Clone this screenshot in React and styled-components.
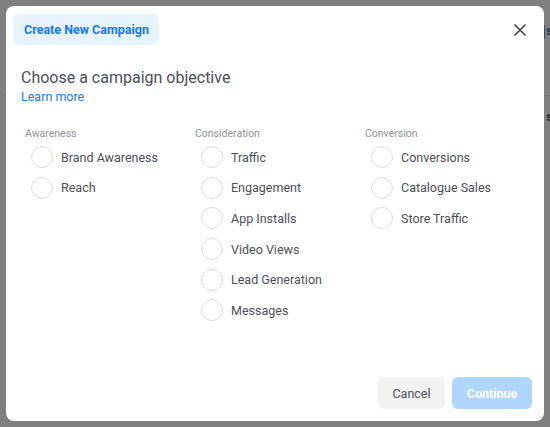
import React from 'react';
import styled, { createGlobalStyle } from 'styled-components';

const GlobalStyle = createGlobalStyle`
    html, body {
        margin: 0;
        padding: 0;
        background: #808080;
        font-family: Roboto, "Liberation Sans", Arial, sans-serif;
    }
`;

const objectives = [
    { title: 'Awareness', items: ['Brand Awareness', 'Reach'] },
    { title: 'Consideration', items: ['Traffic', 'Engagement', 'App Installs', 'Video Views', 'Lead Generation', 'Messages'] },
    { title: 'Conversion', items: ['Conversions', 'Catalogue Sales', 'Store Traffic'] },
];

const App = () => {
    return (
        <>
            <GlobalStyle />
            <Page>
                <PageHeader>
                    <PageTab>s</PageTab>
                </PageHeader>
                <PageRow>s</PageRow>
            </Page>
            <Overlay>
                <Modal>
                    <Header>
                        <HeaderTab>Create New Campaign</HeaderTab>
                        <CloseButton aria-label="Close">
                            <svg width="12" height="12" viewBox="0 0 12 12">
                                <path d="M1 1 L11 11 M11 1 L1 11" stroke="#444950" strokeWidth="1.7" strokeLinecap="round" />
                            </svg>
                        </CloseButton>
                    </Header>
                    <Intro>
                        <Title>Choose a campaign objective</Title>
                        <LearnMore href="#">Learn more</LearnMore>
                    </Intro>
                    <Columns>
                        {objectives.map((group) => (
                            <Column key={group.title}>
                                <GroupTitle>{group.title}</GroupTitle>
                                {group.items.map((item) => (
                                    <Option key={item}>
                                        <Radio />
                                        <OptionLabel>{item}</OptionLabel>
                                    </Option>
                                ))}
                            </Column>
                        ))}
                    </Columns>
                    <Footer>
                        <Button>Cancel</Button>
                        <Button primary disabled>Continue</Button>
                    </Footer>
                </Modal>
            </Overlay>
        </>
    );
};

const Page = styled.div`
    width: 550px;
    height: 427px;
    overflow: hidden;
`;

const PageHeader = styled.div`
    height: 96px;
    border-bottom: 1px solid #737373;
    display: flex;
    justify-content: flex-end;
    padding-top: 25px;
    box-sizing: border-box;
`;

const PageTab = styled.div`
    border-left: 2px solid #1f4f8a;
    padding-left: 1px;
    font-size: 13px;
    font-weight: 700;
    color: #333;
    width: 4px;
    height: 14px;
    line-height: 12px;
    overflow: hidden;
`;

const PageRow = styled.div`
    text-align: right;
    padding-top: 14px;
    font-size: 13px;
    font-weight: 700;
    color: #2a2a2a;
    height: 14px;
    line-height: 14px;
    overflow: hidden;
    margin-right: -3px;
`;

const Overlay = styled.div`
    position: fixed;
    inset: 0;
    padding: 6px;
`;

const Modal = styled.div`
    width: 538px;
    height: 415px;
    background: #fff;
    border-radius: 8px;
    padding: 8px 7px 11px 7px;
    box-sizing: border-box;
    display: flex;
    flex-direction: column;
`;

const Header = styled.div`
    display: flex;
    align-items: center;
    justify-content: space-between;
`;

const HeaderTab = styled.div`
    background: #e7f3ff;
    color: #1877f2;
    font-size: 12.5px;
    font-weight: 700;
    height: 31px;
    line-height: 31px;
    padding: 0 10px 0 11px;
    border-radius: 6px;
`;

const CloseButton = styled.button`
    border: none;
    background: none;
    padding: 0;
    margin-right: 11px;
    width: 12px;
    height: 12px;
    display: flex;
    cursor: pointer;
`;

const Intro = styled.div`
    padding: 23px 8px 0 8px;
`;

const Title = styled.div`
    font-size: 16px;
    color: #4b4f56;
    line-height: 20px;
`;

const LearnMore = styled.a`
    display: block;
    font-size: 12.5px;
    color: #1877f2;
    text-decoration: none;
    line-height: 16px;
    margin-top: 1px;
`;

const Columns = styled.div`
    display: grid;
    grid-template-columns: 170px 170px 170px;
    padding: 22px 0 0 12px;
    flex: 1;
    align-content: start;
`;

const Column = styled.div`
    display: flex;
    flex-direction: column;
`;

const GroupTitle = styled.div`
    font-size: 10.5px;
    color: #90949c;
    line-height: 13px;
    margin-bottom: 2px;
`;

const Option = styled.label`
    display: flex;
    align-items: center;
    height: 30.6px;
    padding-left: 6px;
    gap: 8px;
    cursor: pointer;
`;

const Radio = styled.span`
    width: 20px;
    height: 20px;
    border-radius: 50%;
    border: 1px solid #dadde1;
    box-sizing: content-box;
    flex-shrink: 0;
`;

const OptionLabel = styled.span`
    font-size: 12.5px;
    color: #4b4f56;
`;

const Footer = styled.div`
    display: flex;
    justify-content: flex-end;
    gap: 7px;
    padding-right: 5px;
`;

const Button = styled.button`
    height: 32px;
    border: none;
    border-radius: 6px;
    font-family: Roboto, "Liberation Sans", Arial, sans-serif;
    font-size: 12.5px;
    padding: 0 14px;
    margin-bottom: 1px;
    background: ${(p) => (p.primary ? '#b0d5ff' : '#f2f2f2')};
    color: ${(p) => (p.primary ? '#fff' : '#4b4f56')};
    font-weight: ${(p) => (p.primary ? 700 : 400)};
    min-width: ${(p) => (p.primary ? '80px' : '67px')};
`;

export default App;
